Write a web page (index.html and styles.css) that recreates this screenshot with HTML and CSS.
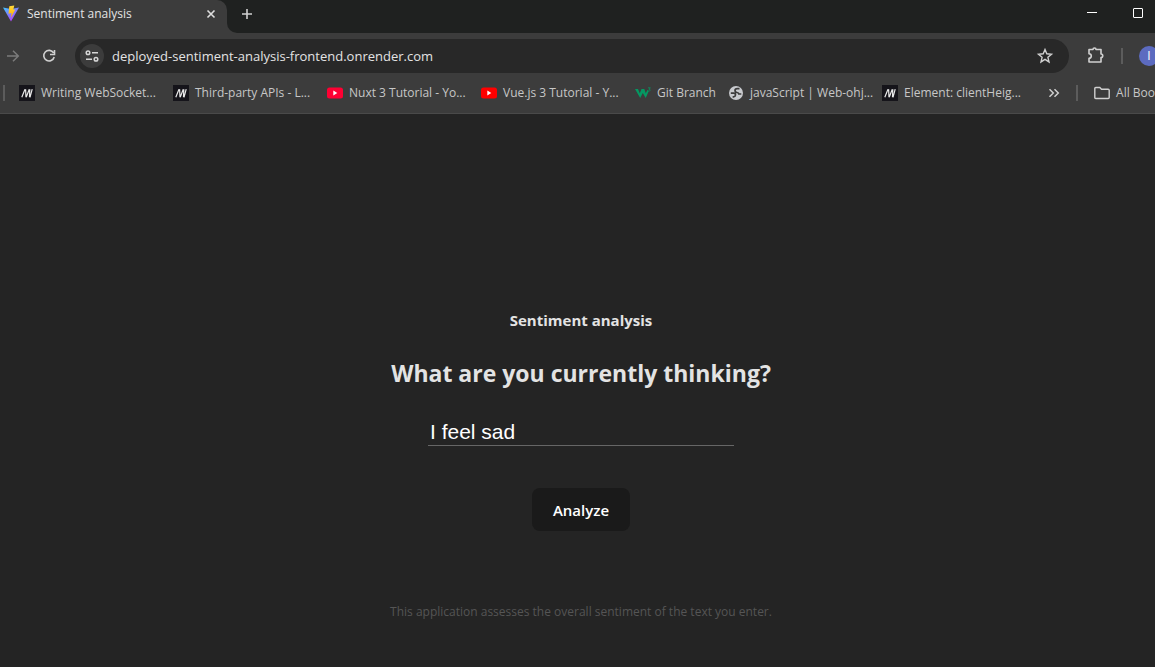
FILE: index.html
```html
<!DOCTYPE html>
<html lang="en">
<head>
<meta charset="utf-8">
<title>Sentiment analysis</title>
<link rel="stylesheet" href="styles.css">
</head>
<body>
<svg class="defs" aria-hidden="true">
  <symbol id="mdn" viewBox="0 0 16 16"><path fill="#15141a" d="M0 0h16v16H0z"/><path d="M2.800 12.300 6 4.200M6.600 4.200 7 12.300M7.200 12.300 10.300 4.200M10.800 4.200l-.3 8.100M11 12.300 13.200 4.200" fill="none" stroke="#e8e8e8" stroke-width="1.200"/></symbol>
  <symbol id="youtube" viewBox="0 0 16 16"><rect y="2.500" width="16" height="11" rx="2.500" fill="currentColor"/><path d="M6.300 5.600v4.800l4-2.400z" fill="#fff"/></symbol>
</svg>
<header class="browser">
  <div class="tabstrip">
    <div class="tab">
      <svg class="icon16" viewBox="0 0 16 16" aria-hidden="true">
        <defs>
          <linearGradient id="shield" x1="0" y1="0" x2=".6" y2="1"><stop offset="0" stop-color="#41c8ff"/><stop offset="1" stop-color="#b63cfb"/></linearGradient>
          <linearGradient id="bolt" x1="0" y1="0" x2="0" y2="1"><stop offset="0" stop-color="#ffdb3b"/><stop offset="1" stop-color="#ffa800"/></linearGradient>
        </defs>
        <path d="M0 1.600 8 3l8-1.400L8 15.500z" fill="url(#shield)"/>
        <path d="m6.300 .2 5-.8-1 4.400 2-.3-4.300 8.300.5-4.700-3 .6z" fill="url(#bolt)"/>
      </svg>
      <span class="tab-title">Sentiment analysis</span>
      <button class="plain" aria-label="Close tab"><svg class="icon16" viewBox="0 0 16 16"><path d="m4.500 4.500 7 7m0-7-7 7" stroke="#dedede" stroke-width="1.600"/></svg></button>
    </div>
    <button class="plain newtab" aria-label="New tab"><svg class="icon16" viewBox="0 0 16 16"><path d="M8 3v10M3 8h10" stroke="#d0d0d0" stroke-width="1.600"/></svg></button>
    <div class="window-controls">
      <button class="plain" aria-label="Minimize"><svg class="icon16" viewBox="0 0 16 16"><path d="M3 7.500h10" stroke="#fff"/></svg></button>
      <button class="plain" aria-label="Maximize"><svg class="icon16" viewBox="0 0 16 16"><rect x="3.500" y="3.500" width="9" height="9" rx=".5" fill="none" stroke="#fff"/></svg></button>
    </div>
  </div>
  <div class="toolbar">
    <button class="plain" aria-label="Forward"><svg class="icon16" viewBox="0 0 16 16"><path d="M2 8h11M8 2.700 13.300 8 8 13.300" fill="none" stroke="#7b7b7b" stroke-width="1.500"/></svg></button>
    <button class="plain" aria-label="Reload"><svg class="icon16" viewBox="0 0 16 16"><path d="M12.600 4.900A5.300 5.300 0 1 0 13.200 9M13.500 2v4.500H9" fill="none" stroke="#d0d0d0" stroke-width="1.600"/></svg></button>
    <div class="omnibox">
      <button class="plain site-info" aria-label="View site information"><svg class="icon16" viewBox="0 0 16 16"><g fill="none" stroke="#d6d6d6" stroke-width="1.500"><circle cx="4" cy="4.700" r="1.800"/><path d="M8 4.700h6M2 11.300h6"/><circle cx="12" cy="11.300" r="1.800"/></g></svg></button>
      <input class="url" type="text" aria-label="Address" value="deployed-sentiment-analysis-frontend.onrender.com">
      <button class="plain" aria-label="Bookmark this tab"><svg class="icon16" viewBox="0 0 16 16"><path d="m8 1.500 1.800 4.300 4.700.4-3.600 3.100 1.100 4.600L8 11.400l-4 2.500 1.100-4.600-3.600-3.100 4.700-.4z" fill="none" stroke="#d0d0d0" stroke-width="1.400"/></svg></button>
    </div>
    <button class="plain" aria-label="Extensions"><svg class="icon18" viewBox="0 0 18 18"><path d="M2 2.500h4a1.500 1.500 0 0 1 3 0h5V7a1.500 1.500 0 0 1 0 3.500V15H2v-3.700a2.300 2.300 0 0 0 0-4.600z" fill="none" stroke="#d0d0d0" stroke-width="1.600" stroke-linejoin="round"/></svg></button>
    <span class="divider"></span>
    <button class="plain avatar" aria-label="Profile">I</button>
  </div>
  <nav class="bookmarks" aria-label="Bookmarks">
    <span class="divider"></span>
    <div class="bookmark-list">
      <a class="bookmark" href="#"><svg class="icon16"><use href="#mdn"/></svg><span>Writing WebSocket...</span></a>
      <a class="bookmark" href="#"><svg class="icon16"><use href="#mdn"/></svg><span>Third-party APIs - L...</span></a>
      <a class="bookmark" href="#"><svg class="icon16 crimson"><use href="#youtube"/></svg><span>Nuxt 3 Tutorial - Yo...</span></a>
      <a class="bookmark" href="#"><svg class="icon16 red"><use href="#youtube"/></svg><span>Vue.js 3 Tutorial - Y...</span></a>
      <a class="bookmark short" href="#"><svg class="icon16" viewBox="0 0 16 16"><path d="M0 4h3l1.800 4.300L6.500 4h2.800l1.500 4.300L12.500 4.800l1.200 1.500-3 6.700-2.900-5-2.600 5z" fill="#059862"/><path d="M13 2.800h2.300l-1.200 1.500c1.700 0 1.600 2-.9 1.700" fill="none" stroke="#059862" stroke-width=".8"/></svg><span>Git Branch</span></a>
      <a class="bookmark" href="#"><svg class="icon16" viewBox="0 0 16 16"><circle cx="8" cy="8" r="7" fill="#c8cace"/><path d="M11.500 3.600H9.200Q7 3.600 7 5.600q0 1.700 2 1.900 1.700.2 1.900 1.500h2.400M2.800 8.200h3q1.700 0 1.700 1.700 0 1.600-2 1.900v1" fill="none" stroke="#3c3c3c" stroke-width="1.700"/></svg><span>javaScript | Web-ohj...</span></a>
      <a class="bookmark" href="#"><svg class="icon16"><use href="#mdn"/></svg><span>Element: clientHeig...</span></a>
    </div>
    <button class="plain" aria-label="More bookmarks"><svg class="icon16" viewBox="0 0 16 16"><path d="m3.500 4.200 3.800 3.800-3.800 3.800m5-7.600L12.300 8l-3.800 3.800" fill="none" stroke="#d0d0d0" stroke-width="1.500"/></svg></button>
    <span class="divider"></span>
    <a class="all" href="#"><svg class="icon16" viewBox="0 0 16 16"><path d="M.8 3.500q0-1 1-1h4L7.500 4.300h6.700q1 0 1 1v7.200q0 1-1 1H1.800q-1 0-1-1z" fill="none" stroke="#d0d0d0" stroke-width="1.400"/></svg><span>All Boo</span></a>
  </nav>
</header>
<main class="page">
  <h1 class="app-name">Sentiment analysis</h1>
  <form class="form">
    <label class="question" for="thought">What are you currently thinking?</label>
    <input class="thought" id="thought" type="text" value="I feel sad">
    <button class="analyze" type="button">Analyze</button>
  </form>
  <p class="note">This application assesses the overall sentiment of the text you enter.</p>
</main>
</body>
</html>
```

FILE: styles.css
```css
* { box-sizing: border-box; }
body {
  margin: 0;
  min-height: 100vh;
  display: flex;
  flex-direction: column;
  overflow: hidden;
  background: #242424;
  color: #e3e3e3;
  font: 12px/16px "Open Sans", "Noto Sans", sans-serif;
}
.defs { display: none; }
svg { display: block; flex: none; overflow: visible; }
.icon16 { width: 16px; height: 16px; }
.icon18 { width: 18px; height: 18px; }
.plain { flex: none; padding: 0; border: 0; background: none; color: inherit; font: inherit; }
.browser { background: #3c3c3c; border-bottom: 1px solid #4a4a4a; }

.tabstrip { display: flex; align-items: stretch; height: 33px; background: #3c3c3c; }
.tab { display: flex; align-items: center; gap: 8px; width: 227px; padding: 0 8px 6px 3px; background: #3c3c3c; border-radius: 0 10px 0 0; box-shadow: 10px -10px 0 #1f2120; }
.tab-title { flex: 1; }
.newtab { width: 40px; padding: 0 0 6px 12px; background: #1f2120; border-radius: 0 0 0 10px; }
.window-controls { flex: 1; display: flex; justify-content: flex-end; gap: 30px; padding: 0 9px 7px 0; background: #1f2120; }

.toolbar { display: flex; align-items: center; height: 46px; padding-left: 5px; gap: 16px; }
.toolbar > .plain:first-child { margin-right: 4px; }
.omnibox { flex: 1; display: flex; align-items: center; gap: 8px; height: 34px; margin: 0 2px; padding: 0 16px 0 5px; border-radius: 17px; background: #282828; }
.site-info { display: grid; place-items: center; width: 24px; height: 24px; border-radius: 12px; background: #3c3c3c; }
.url { flex: 1; min-width: 0; padding: 0; border: 0; outline: 0; background: none; color: #e3e3e3; font: 13px/18px "Open Sans", "Noto Sans", sans-serif; }
.divider { flex: none; width: 2px; height: 16px; background: #5c5c5c; }
.avatar { width: 20px; height: 20px; margin-right: -4px; border-radius: 50%; background: #5c6bc0; color: #fff; }

.bookmarks { display: flex; align-items: center; height: 34px; padding: 0 0 6px 3px; gap: 14px; color: #c7c7c7; }
.bookmark-list { flex: 1; display: flex; min-width: 0; overflow: hidden; }
.bookmark, .all { display: flex; align-items: center; gap: 6px; color: inherit; text-decoration: none; white-space: nowrap; }
.bookmark { flex: 0 0 154px; }
.short { flex-basis: 93px; }
.crimson { color: #ff0033; }
.red { color: #ff0000; }
.all { margin-left: 2px; }

.page { flex: 1; display: flex; flex-direction: column; align-items: center; padding: 194px 0 45px 7px; }
.app-name { margin: 0 0 25px; font-size: 15px; line-height: 24px; font-weight: 700; }
.form { display: flex; flex-direction: column; align-items: center; }
.question { margin-bottom: 27px; font-size: 23px; line-height: 32px; font-weight: 700; }
.thought { width: 306px; height: 30px; margin-bottom: 42px; padding: 2px 2px 0; border: 0; border-bottom: 1px solid #666; outline: 0; background: none; color: #fff; font: 21px/26px "Liberation Sans", Arial, sans-serif; }
.analyze { padding: 10px 21px 8px; border: 0; border-radius: 8px; background: #1a1a1a; color: #fff; font: 600 15px/25px "Open Sans", "Noto Sans", sans-serif; }
.note { margin: 71px 0 0; color: #555; font-size: 12px; line-height: 20px; }
```
